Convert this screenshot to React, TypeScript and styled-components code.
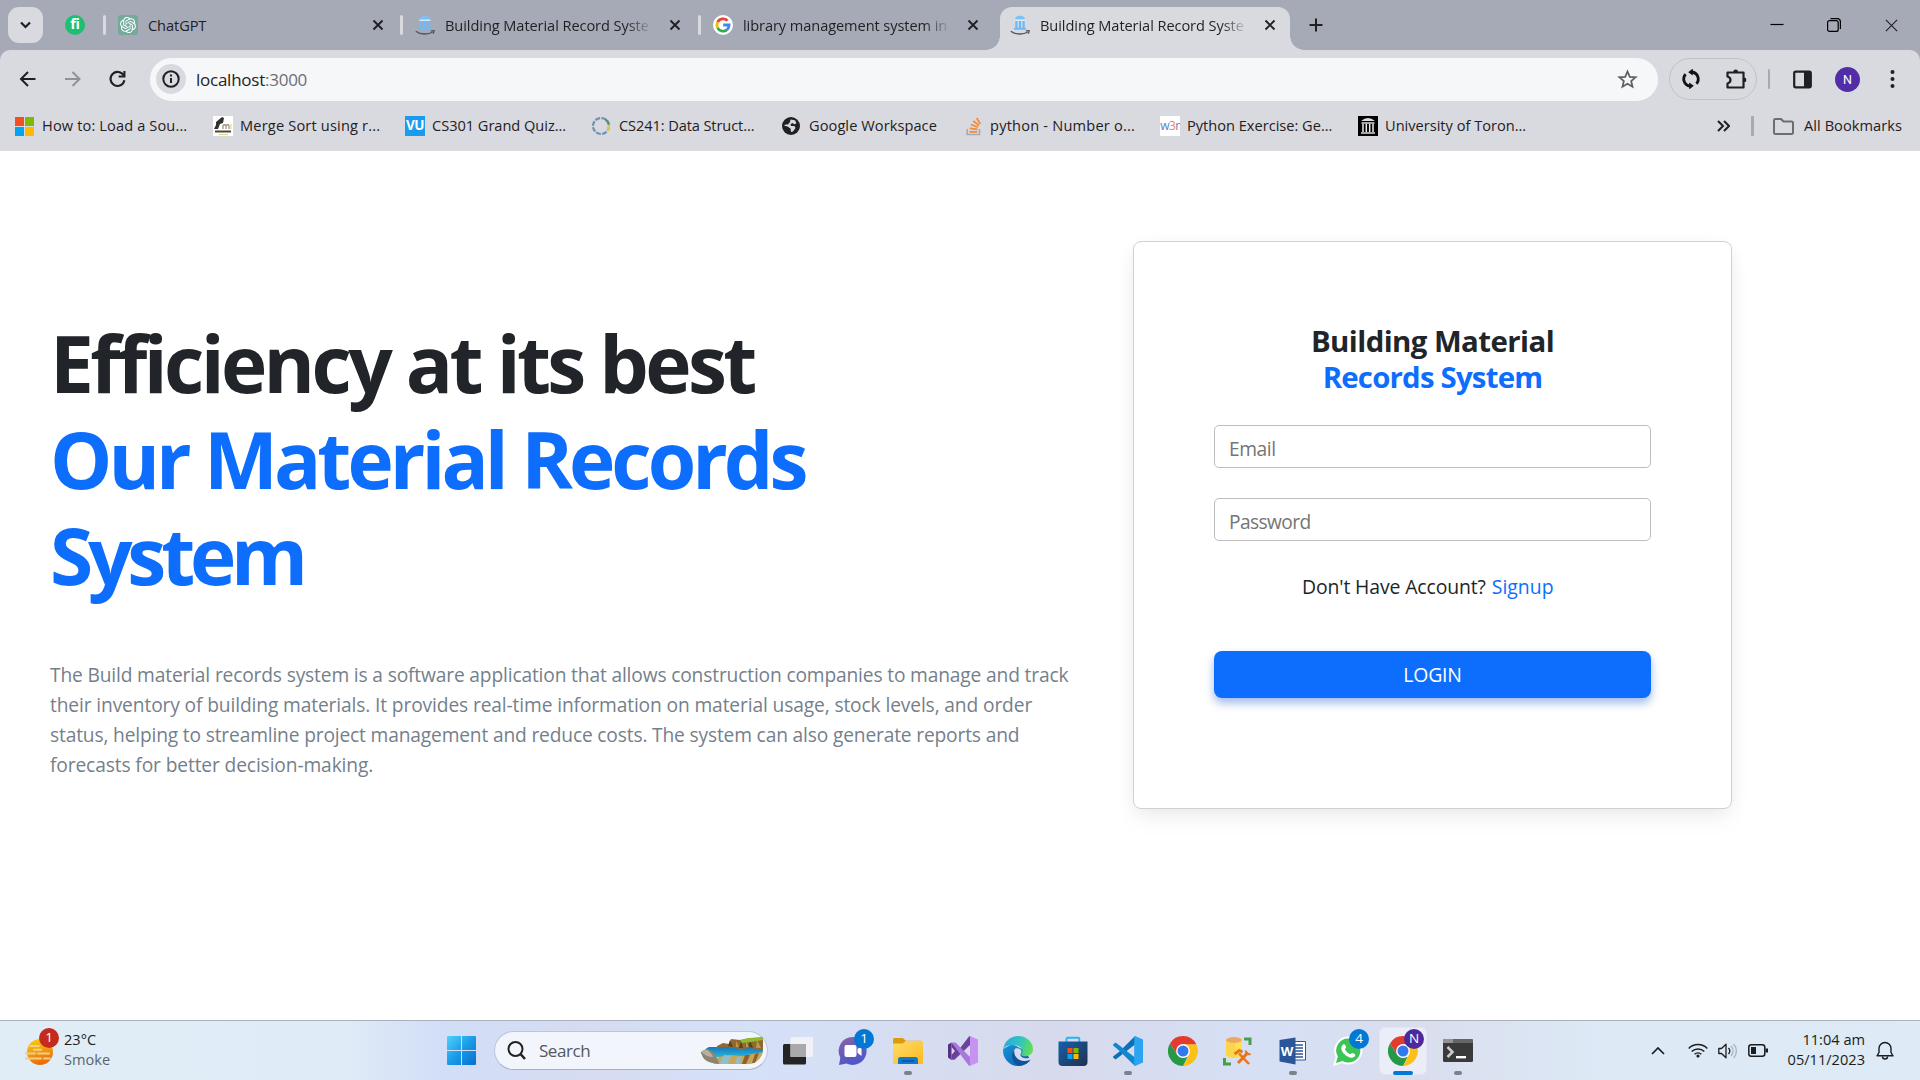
import React from "react";
import styled, { createGlobalStyle, css } from "styled-components";
import { SiOpenai } from "react-icons/si";

const Global = createGlobalStyle`
  *, *::before, *::after { box-sizing: border-box; }
  html, body { margin: 0; padding: 0; }
  body { background: #fff; overflow: hidden; font-family: "Open Sans", "Noto Sans", sans-serif; }
  svg { display: block; flex: none; }
`;

const Screen = styled.div`
  width: 1920px;
  height: 1080px;
  display: flex;
  flex-direction: column;
  overflow: hidden;
`;

/* ---------- tab strip ---------- */
const TabStrip = styled.header`
  display: flex;
  align-items: center;
  height: 50px;
  padding-left: 8px;
  background: #a6aab7;
`;
const TabSearch = styled.button`
  width: 35px;
  height: 36px;
  display: grid;
  place-items: center;
  border: 0;
  padding: 0;
  border-radius: 11px;
  background: #d9dadf;
`;
const PinnedTab = styled.div`
  width: 60px;
  padding-left: 22px;
`;
const Fiverr = styled.div`
  width: 20px;
  height: 20px;
  border-radius: 50%;
  background: #1dbf73;
  color: #fff;
  font-size: 14.5px;
  font-weight: 700;
  font-variant-ligatures: none;
  line-height: 18px;
  text-align: center;
  letter-spacing: -0.3px;
`;
const TabDivider = styled.i`
  width: 3px;
  height: 20px;
  border-radius: 2px;
  background: #d9dadf;
`;
const Tab = styled.div<{ $w: number; $end: number; $active?: boolean }>`
  position: relative;
  display: flex;
  align-items: center;
  width: ${(p) => p.$w}px;
  height: 36px;
  padding: 0 ${(p) => p.$end}px 0 12px;
  ${(p) =>
    p.$active &&
    css`
      align-self: flex-end;
      height: 43px;
      padding: 0 ${p.$end}px 7px 10px;
      border-radius: 12px 12px 0 0;
      background: #d9dadf;
      &::before,
      &::after {
        content: "";
        position: absolute;
        bottom: 0;
        width: 14px;
        height: 14px;
      }
      &::before {
        left: -14px;
        background: radial-gradient(circle at 0 0, transparent 13.5px, #d9dadf 14px);
      }
      &::after {
        right: -14px;
        background: radial-gradient(circle at 100% 0, transparent 13.5px, #d9dadf 14px);
      }
    `}
`;
const TabTitle = styled.span<{ $fade?: boolean }>`
  flex: 1;
  min-width: 0;
  margin: 0 16px 0 10px;
  overflow: hidden;
  white-space: nowrap;
  font-size: 14.6px;
  line-height: 22px;
  letter-spacing: -0.08px;
  color: #1f2023;
  ${(p) => p.$fade && css`mask-image: linear-gradient(90deg, #000 87%, transparent 100%);`}
`;
const NewTab = styled.div`
  margin-left: 19px;
`;
const WindowControls = styled.div`
  display: flex;
  align-items: center;
  gap: 43px;
  margin-left: auto;
  padding-right: 21px;
`;

/* ---------- toolbar ---------- */
const ToolbarBack = styled.div`
  background: #a6aab7;
`;
const Toolbar = styled.div`
  display: flex;
  align-items: center;
  height: 58px;
  padding: 0 18px 0 17px;
  border-radius: 10px 10px 0 0;
  background: #d9dadf;
`;
const NavButtons = styled.div`
  display: flex;
  gap: 23px;
  width: 133px;
`;
const AddressBar = styled.div`
  display: flex;
  align-items: center;
  width: 1508px;
  height: 43px;
  padding: 0 20px 0 6px;
  border-radius: 22px;
  background: #f6f7f9;
`;
const SiteInfo = styled.div`
  width: 30px;
  height: 30px;
  display: grid;
  place-items: center;
  border-radius: 50%;
  background: #d9dadf;
`;
const Url = styled.span`
  flex: 1;
  margin-left: 10px;
  padding-top: 1px;
  font-size: 17px;
  line-height: 24px;
  color: #222327;
  letter-spacing: -0.25px;
  span { color: #6b6e75; }
`;
const ExtensionPill = styled.div`
  display: flex;
  align-items: center;
  gap: 24px;
  width: 88px;
  height: 42px;
  margin-left: 11px;
  padding-left: 11px;
  border: 1px solid #c0c2c9;
  border-radius: 21px;
`;
const ThinRule = styled.i<{ $ml: number; $mr: number; $w?: number }>`
  width: ${(p) => p.$w ?? 2}px;
  height: 20px;
  margin: 0 ${(p) => p.$mr}px 0 ${(p) => p.$ml}px;
  border-radius: 1px;
  background: #a6aab7;
`;
const Avatar = styled.div`
  width: 25px;
  height: 25px;
  margin: 0 19px 0 23px;
  border-radius: 50%;
  background: #512da8;
  color: #fff;
  font: 12.5px/25px Roboto, sans-serif;
  text-align: center;
`;

/* ---------- bookmarks ---------- */
const BookmarkBar = styled.nav`
  display: flex;
  align-items: center;
  height: 43px;
  padding-bottom: 7px;
  background: #d9dadf;
`;
const Bookmark = styled.div<{ $ml: number; $gap?: number }>`
  display: flex;
  align-items: center;
  gap: ${(p) => p.$gap ?? 8}px;
  margin-left: ${(p) => p.$ml}px;
`;
const BookmarkText = styled.span<{ $w: number; $ls: number }>`
  width: ${(p) => p.$w}px;
  padding-bottom: 2px;
  white-space: nowrap;
  font-size: 14.6px;
  line-height: 22px;
  letter-spacing: ${(p) => p.$ls}px;
  color: #1f2023;
`;
const SquareMark = styled.span<{ $bg: string; $fg: string; $fs: number; $fw?: number }>`
  width: 20px;
  height: 20px;
  flex: none;
  background: ${(p) => p.$bg};
  color: ${(p) => p.$fg};
  font-size: ${(p) => p.$fs}px;
  font-weight: ${(p) => p.$fw ?? 400};
  line-height: 19px;
  letter-spacing: -0.6px;
  text-align: center;
  b { color: #f0883e; font-weight: 400; }
`;

/* ---------- page ---------- */
const Page = styled.main`
  display: flex;
  align-items: flex-start;
  height: 869px;
  padding-left: 50px;
  background: #fff;
`;
const Hero = styled.section`
  width: 1083px;
  padding-top: 164px;
`;
const Heading = styled.h1`
  margin: 0;
  font-size: 78.4px;
  font-weight: 700;
  line-height: 96px;
  color: #212529;
`;
const Line = styled.span<{ $ls: number; $blue?: boolean }>`
  display: block;
  width: max-content;
  letter-spacing: ${(p) => p.$ls}px;
  ${(p) => p.$blue && css`color: #0d6efd;`}
`;
const Blurb = styled.p`
  margin: 57px 0 0;
  font-size: 19.2px;
  line-height: 30px;
  color: #757f8b;
`;
const Card = styled.section`
  width: 599px;
  height: 568px;
  margin-top: 90px;
  padding: 81px 80px 0;
  border: 1px solid #d0d1d3;
  border-radius: 8px;
  background: #fff;
  box-shadow: 0 3px 19px -4px rgba(0, 0, 0, 0.07), 0 12px 25px -2px rgba(0, 0, 0, 0.05);
`;
const CardTitle = styled.h2`
  display: flex;
  flex-direction: column;
  align-items: center;
  margin: 0 0 30px;
  font-size: 29.4px;
  font-weight: 700;
  line-height: 36px;
  color: #212529;
`;
const Field = styled.div`
  height: 43px;
  margin-bottom: 30px;
  padding: 0 14px;
  border: 1px solid #bdbdbd;
  border-radius: 5px;
  font-size: 19.2px;
  line-height: 46px;
  color: #757575;
`;
const SignupRow = styled.p`
  display: flex;
  gap: 6px;
  margin: 31px 0 49px 88px;
  font-size: 19.4px;
  line-height: 30px;
  color: #212529;
`;
const Login = styled.div`
  display: flex;
  align-items: center;
  justify-content: center;
  height: 47px;
  border-radius: 8px;
  background: #0d6efd;
  color: #fff;
  font-size: 19.4px;
  box-shadow: 0 5px 10px rgba(13, 80, 200, 0.4);
`;

/* ---------- taskbar ---------- */
const Taskbar = styled.footer`
  display: flex;
  align-items: center;
  height: 60px;
  border-top: 1px solid #a9b1bf;
  background: linear-gradient(90deg, #e1edf6 0%, #dfebf6 18%, #d2def7 23%, #d6dcf1 31%, #d5e1f8 39%, #d7daec 55%, #d6e0f5 66%, #dadeee 74%, #ddeaf6 84%, #deeaf6 100%);
`;
const Weather = styled.div`
  display: flex;
  align-items: center;
  width: 447px;
  padding-left: 25px;
  gap: 5px;
`;
const WeatherIcon = styled.div`
  position: relative;
  width: 34px;
  height: 40px;
  padding-top: 7px;
`;
const Stack = styled.div<{ $right?: boolean }>`
  display: flex;
  flex-direction: column;
  align-items: ${(p) => (p.$right ? "flex-end" : "flex-start")};
  margin: 0 ${(p) => (p.$right ? 11 : 0)}px 3px 0;
`;
const Small = styled.span<{ $muted?: boolean }>`
  font-size: 14.6px;
  line-height: 20px;
  color: ${(p) => (p.$muted ? "#5b646d" : "#1b1d20")};
`;
const Badge = styled.span<{ $bg: string; $x: number; $y: number }>`
  position: absolute;
  left: ${(p) => p.$x}px;
  top: ${(p) => p.$y}px;
  width: 20px;
  height: 20px;
  border-radius: 50%;
  background: ${(p) => p.$bg};
  color: #fff;
  font-size: 13.5px;
  line-height: 19px;
  text-align: center;
`;
const SearchBox = styled.div`
  display: flex;
  align-items: center;
  width: 274px;
  height: 39px;
  margin: 0 2px 0 18px;
  padding: 0 4px 0 12px;
  border: 1px solid #bcc6da;
  border-bottom-color: #a6b0c6;
  border-radius: 20px;
  background: #f2f5fc;
`;
const SearchText = styled.span`
  flex: 1;
  margin-left: 13px;
  font-size: 17px;
  letter-spacing: -0.45px;
  color: #55585e;
`;
const Slot = styled.div`
  position: relative;
  display: grid;
  place-items: center;
  width: 55px;
  height: 59px;
`;
const ActiveTile = styled.div`
  display: grid;
  place-items: center;
  width: 48px;
  height: 48px;
  border: 1px solid #e3e6f2;
  border-radius: 6px;
  background: #ebeef8;
`;
const RunMark = styled.i<{ $active?: boolean }>`
  position: absolute;
  bottom: 5px;
  left: ${(p) => (p.$active ? 18 : 24)}px;
  width: ${(p) => (p.$active ? 20 : 8)}px;
  height: 4px;
  border-radius: 2px;
  background: ${(p) => (p.$active ? "#0078d4" : "#7d818b")};
`;
const Tray = styled.div`
  display: flex;
  align-items: center;
  margin-left: auto;
  padding-right: 26px;
`;
const TrayIcons = styled.div`
  display: flex;
  align-items: center;
  gap: 10px;
  margin: 0 20px 0 23px;
`;

/* ---------- icons ---------- */
const CloseX = ({ s = 12, w = 1.9 }: { s?: number; w?: number }) => (
  <svg width={s} height={s} viewBox="0 0 12 12" stroke="#1f2023" strokeWidth={w}>
    <path d="M1.5 1.5l9 9M10.5 1.5l-9 9" />
  </svg>
);
const Library = () => (
  <svg width="20" height="20" viewBox="0 0 20 20">
    <path d="M5 4.600C5 2 7.500.8 10 .8s5 1.200 5 3.800z" fill="#7cc0f5" />
    <rect x="4.500" y="4.500" width="11" height="1.500" fill="#d5ebfc" />
    <path d="M5.300 6h2.200v7H5.300zM8.900 6h2.200v7H8.900zM12.500 6h2.200v7h-2.200zM4 12.800h12v2H4z" fill="#6fb9f5" />
    <path d="M.8 16.200c4.500 3.600 12.500 3.600 17 .8" fill="none" stroke="#50565f" strokeWidth="1.300" />
    <path d="M15.800 15.800l3.400-.2-.8 3.200" fill="none" stroke="#50565f" strokeWidth="1.200" />
  </svg>
);
const GoogleG = () => (
  <svg width="20" height="20" viewBox="0 0 20 20">
    <circle cx="10" cy="10" r="10" fill="#fff" />
    <g fill="none" strokeWidth="2.800">
      <path d="M14.500 5.700A6.100 6.100 0 0 0 4.600 7.200" stroke="#ea4335" />
      <path d="M4.600 7.200a6.100 6.100 0 0 0 0 5.600" stroke="#fbbc05" />
      <path d="M4.600 12.800a6.100 6.100 0 0 0 9.500 1.800" stroke="#34a853" />
      <path d="M14.100 14.600A6 6 0 0 0 16.100 10H10.200" stroke="#4285f4" />
    </g>
  </svg>
);
const ChatGptMark = styled.div`
  width: 20px;
  height: 20px;
  display: grid;
  place-items: center;
  border-radius: 3px;
  background: #74aa9c;
  color: #fff;
`;
const Chrome = () => (
  <svg width="30" height="30" viewBox="0 0 30 30">
    <path d="M15 8.200h13.300A15 15 0 0 1 15 30l5.900-11.600z" fill="#fbc116" />
    <path d="M2 7.500l7.100 10.900 5.900 3.400 4.500-1L15 30A15 15 0 0 1 2 7.500z" fill="#279847" />
    <path d="M2 7.500A15 15 0 0 1 28.300 8.200H15l-5.900 10.200z" fill="#e33b2e" />
    <circle cx="15" cy="15" r="6.900" fill="#fff" />
    <circle cx="15" cy="15" r="5.500" fill="#3478ed" />
  </svg>
);
const WinLogo = () => (
  <svg width="29" height="29" viewBox="0 0 29 29">
    <defs>
      <linearGradient id="wl" gradientUnits="userSpaceOnUse" x1="0" y1="0" x2="29" y2="29">
        <stop offset="0" stopColor="#4fd2fc" />
        <stop offset=".5" stopColor="#1b9ae6" />
        <stop offset="1" stopColor="#0470d0" />
      </linearGradient>
    </defs>
    <path fill="url(#wl)" d="M1 0h13v14H0V1a1 1 0 0 1 1-1zM15 0h13a1 1 0 0 1 1 1v13H15zM0 15h14v14H1a1 1 0 0 1-1-1zM15 15h14v13a1 1 0 0 1-1 1H15z" />
  </svg>
);
const Landscape = () => (
  <svg width="63" height="27" viewBox="0 0 63 27">
    <defs>
      <clipPath id="lc"><path d="M0 16c3-3 6-4 9-6 6-6 12-7 21-8l33-2v14c-2 8-7 13-14 13H18C8 26 2 22 0 16z" /></clipPath>
      <linearGradient id="lw" x1="0" y1="0" x2="0" y2="1"><stop offset="0" stopColor="#1976b8" /><stop offset="1" stopColor="#25b6dd" /></linearGradient>
    </defs>
    <g clipPath="url(#lc)">
      <path d="M6 10h57v10H4z" fill="url(#lw)" />
      <path d="M17 9l6-3 6 1 2-5 9 1 23-3v13l-13-2-10 1-12-2-11 1z" fill="#92682f" />
      <path d="M30 3l3 7-5-1zM41 4l2 7h-4zM50 3l3 8-5-1z" fill="#5a421f" />
      <path d="M36 4l3 6h-3zM46 4l3 6h-3zM57 3l4 8h-5z" fill="#c39550" />
      <path d="M40 3l8-2 15-2v4l-12 2-9 1z" fill="#8dbb31" />
      <path d="M13 27l5-7 12-2 12 1 21-4v12z" fill="#c8a559" />
      <path d="M24 18l7 1-3 8h-9zM37 20l5-1-2 8h-5z" fill="#91bdc9" />
      <path d="M45 18l5 0-4 9h-4zM55 17l4-1-4 10h-3z" fill="#8b6329" />
      <path d="M0 14l7-2c6 2 10 6 12 15H6z" fill="#8d8474" />
      <path d="M1 14l6-1c3 2 5 4 6 7-5 0-9-2-12-6z" fill="#b9b19f" />
    </g>
  </svg>
);
const TaskView = () => (
  <svg width="30" height="30" viewBox="0 0 30 30">
    <rect x="0" y="8" width="23" height="20.500" rx="1.500" fill="#242424" />
    <rect x="7.500" y="1" width="22.500" height="20" rx="1" fill="#f4f4f6" fillOpacity=".88" />
    <path d="M7.500 8H23v13H7.500z" fill="#a9a9aa" />
  </svg>
);
const Chat = () => (
  <svg width="30" height="30" viewBox="0 0 30 30">
    <defs><linearGradient id="ch" x1="0" y1="0" x2=".3" y2="1"><stop offset="0" stopColor="#8a63a4" /><stop offset="1" stopColor="#5057c9" /></linearGradient></defs>
    <path d="M14.500 1a14 14 0 1 1-6 26.600L1 29l1.300-7.300A14 14 0 0 1 14.500 1z" fill="url(#ch)" />
    <rect x="6.500" y="9" width="12" height="12" rx="2" fill="#fff" />
    <path d="M19.500 13l4-3v10l-4-3z" fill="#fff" />
  </svg>
);
const Folder = () => (
  <svg width="30" height="30" viewBox="0 0 30 30">
    <defs><linearGradient id="fo" x1="0" y1="0" x2="1" y2="1"><stop offset="0" stopColor="#ffdc67" /><stop offset="1" stopColor="#fbba22" /></linearGradient></defs>
    <path d="M0 3.500A1.500 1.500 0 0 1 1.500 2h8.200c1 0 2 2.700 3.300 2.700H28L27 9H0z" fill="#dd9b0a" />
    <path d="M0 7.500h9.500L13 5h15.500A1.500 1.500 0 0 1 30 6.500v20a1.500 1.500 0 0 1-1.500 1.500h-27A1.500 1.500 0 0 1 0 26.500z" fill="url(#fo)" />
    <path d="M5 28v-4.500A2.500 2.500 0 0 1 7.500 21h15a2.500 2.500 0 0 1 2.500 2.500V28z" fill="#1177cf" />
    <path d="M8.500 25h13" stroke="#0a4f97" strokeWidth="1.400" />
  </svg>
);
const VisualStudio = () => (
  <svg width="30" height="30" viewBox="0 0 30 30">
    <path d="M0 8.500l3.500-2V24L0 21.500z" fill="#543182" />
    <path d="M3.500 6.500L12 15l-8.500 8.800V19L7 15 3.500 11z" fill="#6a3d9c" />
    <path d="M22 0v9L6.500 23.800H3L21 .5z" fill="#6b439b" />
    <path d="M3.500 6.500h4L22 21v9l-1.500-.7z" fill="#a978db" />
    <path d="M22 0l8 3.500v23L22 30z" fill="#c792f2" />
  </svg>
);
const Edge = () => (
  <svg width="30" height="30" viewBox="0 0 30 30">
    <defs>
      <linearGradient id="e1" x1="0" y1=".3" x2="1" y2=".5"><stop offset="0" stopColor="#2aa9dc" /><stop offset=".55" stopColor="#33c4c0" /><stop offset="1" stopColor="#62e04f" /></linearGradient>
      <linearGradient id="e2" x1="0" y1="0" x2="1" y2="1"><stop offset="0" stopColor="#1795de" /><stop offset="1" stopColor="#0c59a4" /></linearGradient>
    </defs>
    <path d="M.2 13A15 15 0 0 0 15 30c5 0 9.500-2.300 12.500-6.200L21 14 9 8z" fill="url(#e2)" />
    <path d="M.2 13C1.500 5 8 0 15 0c9 0 15 6.500 15 13 0 5-4 7.300-7.500 7.300-2.500 0-4.200-.8-4.200-1.900 0-.8 1.200-1.300 1.200-3.400C19.500 12 16 9.500 12 9.500 6 8.500 2 10 .2 13z" fill="url(#e1)" />
    <path d="M12.500 12.500c2-.8 6 .2 6 3 0 1.700-1 2-1 3.300 0 2.300 3 3.700 6.500 3.500 2.500-.2 4.200-1.300 5-1.700l1 .5-2.500 3.500c-6 3-16 0-17-6-.5-3 .5-5 2-6.100z" fill="#d8dbed" />
    <path d="M11.500 14c-1.500 6 4 11.500 11 11 2 0 3.500-.5 5-1.400C25 28 20 30 15.500 30 9.500 28 7 18 11.500 14z" fill="#0f539b" />
  </svg>
);
const Store = () => (
  <svg width="30" height="30" viewBox="0 0 30 30">
    <defs><linearGradient id="st" x1="0" y1="0" x2="1" y2="1"><stop offset="0" stopColor="#1561ab" /><stop offset="1" stopColor="#22304f" /></linearGradient></defs>
    <path d="M8.500 6V2.800A1 1 0 0 1 9.500 1.800h10.800a1 1 0 0 1 1 1V6" fill="none" stroke="#29b2ef" strokeWidth="1.900" />
    <path d="M.5 5.500h29V26a4 4 0 0 1-4 4h-21a4 4 0 0 1-4-4z" fill="url(#st)" />
    <path d="M9.500 12h5v5h-5z" fill="#f25022" /><path d="M15.500 12h5v5h-5z" fill="#7fba00" />
    <path d="M9.500 18h5v5h-5z" fill="#00a4ef" /><path d="M15.500 18h5v5h-5z" fill="#ffb900" />
  </svg>
);
const VsCode = () => (
  <svg width="30" height="30" viewBox="0 0 30 30">
    <path d="M22 0L6.500 15.500.4 20.200a1 1 0 0 0 0 1.500l1.600 1.400a1 1 0 0 0 1.300 0L22 8.500z" fill="#0d6fb5" />
    <path d="M22 30L6 14.500.4 9.800a1 1 0 0 1 0-1.500L2 6.900a1 1 0 0 1 1.300 0L22 21.500z" fill="#1286cf" />
    <path d="M22 0l8 3.500v23L22 30c-.5-.3-.8-.6-.8-1.300V1.300c0-.7.300-1 .8-1.300z" fill="#29a5f2" />
  </svg>
);
const SqlTools = () => (
  <svg width="30" height="30" viewBox="0 0 30 30">
    <path d="M3 4h16v15c0 2-4 3-8 3s-8-1-8-3z" fill="#fcd64a" />
    <path d="M12 4h7v15c0 1.500-3 2.500-7 3z" fill="#ffe14d" />
    <ellipse cx="11" cy="4" rx="8" ry="3" fill="#eda860" />
    <path d="M21 3h6v6M1.500 22v6H8" fill="none" stroke="#47a048" strokeWidth="3" />
    <g stroke="#e7731b" fill="none">
      <path d="M15 27L25 16.500" strokeWidth="3" />
      <path d="M16 17.500l10 10.500" strokeWidth="2.500" />
      <path d="M11.500 18l5-3.500 3 1.500" strokeWidth="2.800" />
      <path d="M23 14.500c-.5 3 2 4.500 4.500 3.500" strokeWidth="2" />
    </g>
  </svg>
);
const WordBody = styled.div`
  position: relative;
  width: 28px;
  height: 28px;
`;
const WordLetter = styled.span`
  position: absolute;
  left: 1px;
  top: 4px;
  width: 15px;
  color: #fff;
  font-size: 13px;
  font-weight: 700;
  line-height: 20px;
  text-align: center;
`;
const Word = () => (
  <WordBody>
    <svg width="28" height="28" viewBox="0 0 28 28">
      <path d="M14 4.500h12.500V23H14z" fill="#fff" stroke="#2b579a" />
      <path d="M16 8h8M16 11h8M16 14h8M16 17h8M16 20h8" stroke="#2b579a" strokeWidth="1.500" />
      <path d="M.5 3L16.500.5v27L.5 24.500z" fill="#2b579a" />
    </svg>
    <WordLetter>W</WordLetter>
  </WordBody>
);
const WhatsApp = () => (
  <svg width="30" height="30" viewBox="0 0 30 30">
    <path d="M15.500 1.500a13 13 0 1 1-6 24.600L1.500 28.500l2.300-7.800A13 13 0 0 1 15.500 1.500z" fill="#3cc455" stroke="#fff" strokeWidth="2" />
    <path d="M10.300 8.500c.8-.6 1.500-.3 1.900.6l.8 1.900c.3.900-.9 1.600-1 2.200 1 2.300 2.800 4 5.200 5 .8 0 1.300-1.500 2.200-1.300l2.400 1.200c.7.400.5 1.500 0 2.200-1.300 1.700-3.500 1.700-5.600.9-3.700-1.300-6.500-4-7.700-7.400-.6-2 .1-4.300 1.800-5.300z" fill="#fff" />
  </svg>
);
const Terminal = () => (
  <svg width="30" height="23" viewBox="0 0 30 23">
    <rect width="30" height="23" rx="1.500" fill="#3a3a3a" />
    <path d="M0 1.500A1.500 1.500 0 0 1 1.500 0H20v4H0z" fill="#939393" />
    <path d="M10 0h10v4H10zM20 0h8.500A1.500 1.500 0 0 1 30 1.500V4H20z" fill="#666" />
    <path d="M4.500 8l5 5-5 5" fill="none" stroke="#ccc" strokeWidth="2.600" />
    <path d="M13 18.200h10" stroke="#fff" strokeWidth="2.400" />
  </svg>
);

const apps: { icon: React.ReactNode; badge?: string; run?: boolean; active?: boolean }[] = [
  { icon: <TaskView /> },
  { icon: <Chat />, badge: "1" },
  { icon: <Folder />, run: true },
  { icon: <VisualStudio /> },
  { icon: <Edge /> },
  { icon: <Store /> },
  { icon: <VsCode />, run: true },
  { icon: <Chrome /> },
  { icon: <SqlTools /> },
  { icon: <Word />, run: true },
  { icon: <WhatsApp />, badge: "4" },
  { icon: <Chrome />, badge: "N", run: true, active: true },
  { icon: <Terminal />, run: true },
];

export default function App() {
  return (
    <Screen>
      <Global />
      <TabStrip>
        <TabSearch>
          <svg width="11" height="8" viewBox="0 0 11 8" fill="none" stroke="#1f2023" strokeWidth="2.200"><path d="M1 1.500l4.500 4.500L10 1.500" /></svg>
        </TabSearch>
        <PinnedTab><Fiverr>fi</Fiverr></PinnedTab>
        <TabDivider />
        <Tab $w={294} $end={16.5}><ChatGptMark><SiOpenai size={16} /></ChatGptMark><TabTitle>ChatGPT</TabTitle><CloseX /></Tab>
        <TabDivider />
        <Tab $w={295} $end={17}><Library /><TabTitle $fade>Building Material Record Syste</TabTitle><CloseX /></Tab>
        <TabDivider />
        <Tab $w={299} $end={21.5}><GoogleG /><TabTitle $fade>library management system in</TabTitle><CloseX /></Tab>
        <Tab $w={290} $end={14} $active><Library /><TabTitle $fade>Building Material Record Syste</TabTitle><CloseX /></Tab>
        <NewTab>
          <svg width="14" height="14" viewBox="0 0 14 14" stroke="#1f2023" strokeWidth="2"><path d="M7 .5v13M.5 7h13" /></svg>
        </NewTab>
        <WindowControls>
          <svg width="14" height="14" viewBox="0 0 14 14"><path d="M.5 6.500h13" stroke="#000" strokeWidth="1.200" /></svg>
          <svg width="14" height="14" viewBox="0 0 14 14" fill="none" stroke="#000" strokeWidth="1.200"><rect x=".6" y="2.600" width="10.600" height="10.800" rx="2" /><path d="M3.500.7h7A2.800 2.800 0 0 1 13.400 3.500v7.500" /></svg>
          <CloseX s={15} w={0.9} />
        </WindowControls>
      </TabStrip>
      <ToolbarBack>
        <Toolbar>
          <NavButtons>
            <svg width="22" height="22" viewBox="0 0 22 22" fill="none" stroke="#1f2023" strokeWidth="2"><path d="M18.500 11H4.500M11 4L4 11l7 7" /></svg>
            <svg width="22" height="22" viewBox="0 0 22 22" fill="none" stroke="#8f9197" strokeWidth="2"><path d="M3 11h14M10.500 4l7 7-7 7" /></svg>
            <svg width="22" height="22" viewBox="0 0 22 22" fill="none" stroke="#1f2023" strokeWidth="2.100"><path d="M16.700 7.600A7 7 0 1 0 17.400 12.300" /><path d="M17.400 3v5.500h-5.700" /></svg>
          </NavButtons>
          <AddressBar>
            <SiteInfo>
              <svg width="18" height="18" viewBox="0 0 18 18" fill="none" stroke="#1f2023" strokeWidth="2"><circle cx="9" cy="9" r="7.700" /><path d="M9 8v5M9 4.600v2" /></svg>
            </SiteInfo>
            <Url>localhost<span>:3000</span></Url>
            <svg width="21" height="21" viewBox="0 0 21 21" fill="none" stroke="#5d6066" strokeWidth="1.800"><path d="M10.500 2.500l2.300 5.300 5.800.5-4.400 3.800 1.300 5.600-5-3-5 3 1.300-5.600L2.400 8.300l5.800-.5z" /></svg>
          </AddressBar>
          <ExtensionPill>
            <svg width="20" height="20" viewBox="0 0 20 20" fill="none" stroke="#111" strokeWidth="2.800"><path d="M9 17A7.100 7.100 0 0 1 4.600 5.200M11 3a7.100 7.100 0 0 1 4.400 11.800" /><path d="M11.800-.5v7L7.200 3.200zM8.200 20.500v-7l4.600 3.300z" fill="#111" stroke="none" /></svg>
            <svg width="23" height="23" viewBox="0 0 23 23" fill="none" stroke="#1f2023" strokeWidth="2.200"><path d="M2.500 4.500H18.500V19.500H2.500V15.500Q5.500 14.500 5.500 12T2.500 8.500z" strokeLinejoin="round" /><path d="M8.300 4a2.400 2.400 0 0 1 4.800 0zM19 9.500a2.400 2.400 0 0 1 0 4.800z" fill="#1f2023" stroke="none" /></svg>
          </ExtensionPill>
          <ThinRule $ml={11} $mr={23} />
          <svg width="19" height="19" viewBox="0 0 19 19"><rect x="1.200" y="1.700" width="16.600" height="15.600" rx="1.500" fill="none" stroke="#1f2023" strokeWidth="2.200" /><path d="M11 1h7v17h-7z" fill="#1f2023" /></svg>
          <Avatar>N</Avatar>
          <svg width="22" height="20" viewBox="0 0 22 20" fill="#1f2023"><circle cx="13.500" cy="3" r="2" /><circle cx="13.500" cy="10" r="2" /><circle cx="13.500" cy="17" r="2" /></svg>
        </Toolbar>
      </ToolbarBack>
      <BookmarkBar>
        <Bookmark $ml={15} $gap={8}>
          <svg width="19" height="19" viewBox="0 0 19 19"><path d="M0 0h9v9H0z" fill="#f25022" /><path d="M10 0h9v9h-9z" fill="#7fba00" /><path d="M0 10h9v9H0z" fill="#00a4ef" /><path d="M10 10h9v9h-9z" fill="#ffb900" /></svg>
          <BookmarkText $w={145} $ls={0.13}>How to: Load a Sou...</BookmarkText>
        </Bookmark>
        <Bookmark $ml={26} $gap={7}>
          <svg width="20" height="20" viewBox="0 0 20 20"><path d="M0 0h20v20H0z" fill="#fff" /><path d="M3 6l6-5 2 1-1 5-3 1-2 5-4 0 2-4z" fill="#30302c" /><path d="M10 13V9.500q1.500-1.500 3 0V13M13 9.500q2-1.500 3 0V13" fill="none" stroke="#9c947c" strokeWidth="1.300" /><path d="M2 15.500h16" stroke="#4b463b" strokeWidth="2" /><path d="M6 18.600h9M18 8v5" stroke="#e6d36e" /></svg>
          <BookmarkText $w={141} $ls={0.17}>Merge Sort using r...</BookmarkText>
        </Bookmark>
        <Bookmark $ml={24} $gap={7}>
          <SquareMark $bg="#1b9bf0" $fg="#fff" $fs={13.5} $fw={700}>VU</SquareMark>
          <BookmarkText $w={135} $ls={-0.03}>CS301 Grand Quiz...</BookmarkText>
        </Bookmark>
        <Bookmark $ml={24}>
          <svg width="20" height="20" viewBox="0 0 20 20" fill="none" strokeWidth="2.200"><circle cx="10" cy="10" r="8" stroke="#6f8fb3" strokeDasharray="5 1.300" /><path d="M14.500 3.500A8 8 0 0 1 17.800 8" stroke="#4c9a6b" /><path d="M18 9a8 8 0 0 1-1.500 5.500" stroke="#e3c93d" /></svg>
          <BookmarkText $w={136} $ls={-0.1}>CS241: Data Struct...</BookmarkText>
        </Bookmark>
        <Bookmark $ml={27} $gap={9}>
          <svg width="18" height="18" viewBox="0 0 18 18"><circle cx="9" cy="9" r="9" fill="#1f2023" /><path d="M8.500 2.500l4.500.8 1.500 3-2.500 1.200-1-1.500-2.500 1 .5 2h3.500l1 2-2.500 3.500-2 .5-.5-3.500-3-2L2 8.500l1.500-1 2.500 0L8 5z" fill="#d9dadf" /></svg>
          <BookmarkText $w={129} $ls={0.07}>Google Workspace</BookmarkText>
        </Bookmark>
        <Bookmark $ml={28} $gap={8}>
          <svg width="16" height="19" viewBox="0 0 16 19" fill="none"><path d="M1.200 12v5.500h12.300V12" stroke="#a9abb0" strokeWidth="1.700" /><path d="M3.500 14.800h7.800M3.800 11.300l7.700 1.100M5 7.500l7 2.700M7.300 4l5.700 4.500M10.700 1l3.600 6" stroke="#f48a34" strokeWidth="1.700" /></svg>
          <BookmarkText $w={144} $ls={0.2}>python - Number o...</BookmarkText>
        </Bookmark>
        <Bookmark $ml={26} $gap={7}>
          <SquareMark $bg="#fff" $fg="#5b7fc0" $fs={12}>w<b>3</b>r</SquareMark>
          <BookmarkText $w={146} $ls={0}>Python Exercise: Ge...</BookmarkText>
        </Bookmark>
        <Bookmark $ml={25} $gap={7}>
          <svg width="20" height="20" viewBox="0 0 20 20"><path d="M0 0h20v20H0z" fill="#000" /><path d="M3 5q7-6 14 0z" fill="#ddd" /><path d="M3.500 7h13M3 17h14" stroke="#ddd" strokeWidth="1.300" /><path d="M5 8v8M8.300 8v8M11.700 8v8M15 8v8" stroke="#eee" strokeWidth="1.500" /></svg>
          <BookmarkText $w={141} $ls={0}>University of Toron...</BookmarkText>
        </Bookmark>
        <Bookmark $ml={191} $gap={0}>
          <svg width="13" height="12" viewBox="0 0 13 12" fill="none" stroke="#1f2023" strokeWidth="2"><path d="M1 1l5 5-5 5M7 1l5 5-5 5" /></svg>
        </Bookmark>
        <ThinRule $ml={21} $mr={19} $w={3} />
        <Bookmark $ml={0} $gap={10}>
          <svg width="21" height="17" viewBox="0 0 21 17" fill="none" stroke="#6a6d73" strokeWidth="2"><path d="M1 2.500A1.500 1.500 0 0 1 2.500 1H8l2.500 2.500h8A1.500 1.500 0 0 1 20 5v9.500a1.500 1.500 0 0 1-1.500 1.500h-16A1.500 1.500 0 0 1 1 14.500z" /></svg>
          <BookmarkText $w={98} $ls={0.06}>All Bookmarks</BookmarkText>
        </Bookmark>
      </BookmarkBar>

      <Page>
        <Hero>
          <Heading>
            <Line $ls={-3.64}>Efficiency at its best</Line>
            <Line $ls={-3.96} $blue>Our Material Records</Line>
            <Line $ls={-5.2} $blue>System</Line>
          </Heading>
          <Blurb>
            <Line $ls={-0.158}>The Build material records system is a software application that allows construction companies to manage and track</Line>
            <Line $ls={-0.125}>their inventory of building materials. It provides real-time information on material usage, stock levels, and order</Line>
            <Line $ls={-0.165}>status, helping to streamline project management and reduce costs. The system can also generate reports and</Line>
            <Line $ls={-0.125}>forecasts for better decision-making.</Line>
          </Blurb>
        </Hero>
        <Card>
          <CardTitle>
            <Line $ls={-0.56}>Building Material</Line>
            <Line $ls={-0.8} $blue>Records System</Line>
          </CardTitle>
          <Field><Line $ls={-0.45}>Email</Line></Field>
          <Field><Line $ls={-0.6}>Password</Line></Field>
          <SignupRow>
            <Line $ls={-0.12}>Don't Have Account?</Line>
            <Line $ls={0} $blue>Signup</Line>
          </SignupRow>
          <Login><Line $ls={-0.2}>LOGIN</Line></Login>
        </Card>
      </Page>

      <Taskbar>
        <Weather>
          <WeatherIcon>
            <svg width="28" height="28" viewBox="0 0 28 28">
              <defs><linearGradient id="sun" x1="0" y1="0" x2=".3" y2="1"><stop offset="0" stopColor="#fbd40e" /><stop offset="1" stopColor="#ec6d0c" /></linearGradient></defs>
              <circle cx="15" cy="14" r="13" fill="url(#sun)" />
              <path d="M5 8h9M0 15.500h10M13 15.500h11M0 20.500h16M19 20.500h6M9 11.800h7" stroke="#ecd08c" strokeWidth="2" strokeLinecap="round" />
            </svg>
            <Badge $bg="#c42b1c" $x={14} $y={-3}>1</Badge>
          </WeatherIcon>
          <Stack><Small>23°C</Small><Small $muted>Smoke</Small></Stack>
        </Weather>
        <WinLogo />
        <SearchBox>
          <svg width="19" height="19" viewBox="0 0 19 19" fill="none" stroke="#222" strokeWidth="2"><circle cx="8.500" cy="8" r="7" /><path d="M13.500 13l4.500 5" strokeWidth="2.600" /></svg>
          <SearchText>Search</SearchText>
          <Landscape />
        </SearchBox>
        {apps.map((a, i) => (
          <Slot key={i}>
            {a.active ? <ActiveTile>{a.icon}</ActiveTile> : a.icon}
            {a.badge && <Badge $bg={a.badge === "N" ? "#4b2a9e" : "#0078d4"} $x={29} $y={8}>{a.badge}</Badge>}
            {a.run && <RunMark $active={a.active} />}
          </Slot>
        ))}
        <Tray>
          <svg width="14" height="8" viewBox="0 0 14 8" fill="none" stroke="#1b1d20" strokeWidth="1.700"><path d="M1 7l6-6 6 6" /></svg>
          <TrayIcons>
            <svg width="20" height="15" viewBox="0 0 20 15" fill="none" stroke="#1b1d20" strokeWidth="1.500"><path d="M.7 5.500a13 13 0 0 1 18.600 0M3.700 8.500a9 9 0 0 1 12.600 0M6.600 11.300a5 5 0 0 1 6.800 0" /><circle cx="10" cy="13" r="1.600" fill="#1b1d20" stroke="none" /></svg>
            <svg width="20" height="16" viewBox="0 0 20 16" fill="none" stroke="#1b1d20" strokeWidth="1.300"><path d="M.8 5.500h2.700L8 1.200v13.600l-4.500-4.300H.8z" strokeLinejoin="round" /><path d="M10.500 5a4.500 4.500 0 0 1 0 6" /><path d="M13 3a7 7 0 0 1 0 10M15.500 1a10 10 0 0 1 0 14" stroke="#a9b2bc" /></svg>
            <svg width="20" height="13" viewBox="0 0 20 13"><rect x=".8" y=".8" width="16" height="11.400" rx="2.500" fill="none" stroke="#1b1d20" strokeWidth="1.500" /><path d="M3 3h5v7H3zM17.500 4.500H20v4h-2.500z" fill="#1b1d20" /></svg>
          </TrayIcons>
          <Stack $right><Small>11:04 am</Small><Small>05/11/2023</Small></Stack>
          <svg width="18" height="20" viewBox="0 0 18 20" fill="none" stroke="#1b1d20" strokeWidth="1.400"><path d="M1 14.800l2-3.300V7.500a6 6 0 0 1 12 0v4l2 3.300z" strokeLinejoin="round" /><path d="M6.500 15.500a2.500 2.500 0 0 0 5 0" /></svg>
        </Tray>
      </Taskbar>
    </Screen>
  );
}
